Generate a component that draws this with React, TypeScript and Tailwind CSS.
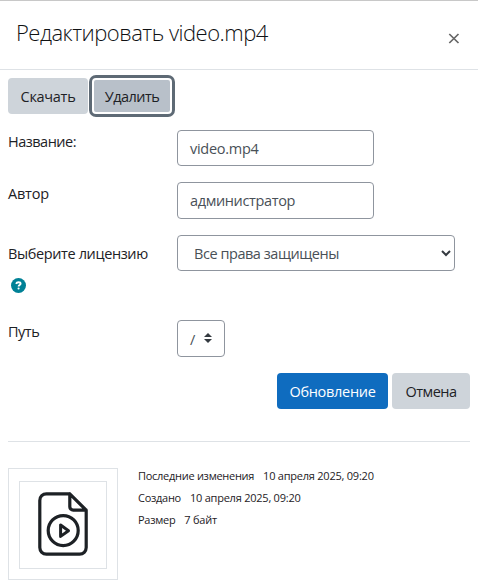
import React from 'react';

function Row({ label, labelClass, className, children }: { label: string; labelClass: string; className: string; children: React.ReactNode }) {
  return (
    <div className={`flex items-start ${className}`}>
      <div className="w-[169px] shrink-0">
        <span className={`block whitespace-nowrap leading-6 ${labelClass}`}>{label}</span>
      </div>
      {children}
    </div>
  );
}

function Info({ label, value }: { label: string; value: string }) {
  return (
    <div className="flex h-[22px] items-center gap-[9px] whitespace-nowrap text-[11px]">
      <span className="tracking-[-0.28px]">{label}</span>
      <span className="tracking-[-0.23px]">{value}</span>
    </div>
  );
}

function HelpIcon() {
  return (
    <svg className="ml-[3px] mt-[12px] block" width="15" height="15" viewBox="0 0 15 15">
      <circle cx="7.5" cy="7.5" r="7.5" fill="#008196" />
      <path d="M5.1 5.9C5.5 4.8 6.3 4.3 7.5 4.3c1.3 0 2.1.6 2.1 1.5 0 1.2-2 1.3-2 2.7" fill="none" stroke="#fff" strokeWidth="1.9" />
      <rect x="6.5" y="9.4" width="2.1" height="2.1" rx="1" fill="#fff" />
    </svg>
  );
}

function VideoFileIcon() {
  return (
    <svg className="mb-px" width="50" height="64" viewBox="0 0 50 64" fill="none" stroke="#1d2125" strokeWidth="3.2" strokeLinejoin="round" strokeLinecap="round">
      <path d="M31.8 1.8H8.4a6.6 6.6 0 0 0-6.6 6.6v47.2a6.6 6.6 0 0 0 6.6 6.6h33.2a6.6 6.6 0 0 0 6.6-6.6V18.2L31.8 1.8v13a3.4 3.4 0 0 0 3.4 3.4h13" />
      <circle cx="25.2" cy="38.6" r="15" />
      <path d="M22.6 33v11.4l7.9-5.7z" strokeWidth="3" />
    </svg>
  );
}

export default function App() {
  return (
    <div className="h-[588px] w-[478px] overflow-hidden border-t border-[#c8c8c8] bg-white font-['Open_Sans','Noto_Sans',sans-serif] text-[14.5px] text-[#1d2125]">
      <header className="flex h-[69px] items-start justify-between border-b border-[#dee2e6] pl-4 pr-[18px]">
        <h1 className="mt-[13px] whitespace-nowrap text-[22px] font-light leading-9 tracking-[-0.5px] text-[#101214]">Редактировать video.mp4</h1>
        <svg className="mt-[32px] block" width="12" height="11" viewBox="0 0 12 11" stroke="#666" strokeWidth="1.7">
          <path d="M1.3 1l9.2 9M10.5 1l-9.2 9" />
        </svg>
      </header>
      <main className="px-2 pt-2">
        <div className="flex h-9">
          <button className="w-20 rounded-[4px] bg-[#ced4da] pt-0.5 tracking-[-0.3px]">Скачать</button>
          <button className="ml-1 w-[80px] rounded-[4px] border-2 border-white bg-[#b8c0c9] pt-0.5 tracking-[-0.55px] outline-3 outline-[#5e6a75]">Удалить</button>
        </div>
        <Row label="Название:" labelClass="tracking-[-0.5px]" className="mt-4">
          <div className="flex h-9 w-[197px] items-center rounded-[4px] border border-[#8f959e] px-3 pt-0.5 tracking-[-0.28px] text-[#495057]">video.mp4</div>
        </Row>
        <Row label="Автор" labelClass="tracking-[-0.2px]" className="mt-4">
          <div className="flex h-[37px] w-[197px] items-center rounded-[4px] border border-[#8f959e] px-3 pt-px tracking-[-0.36px] text-[#495057]">администратор</div>
        </Row>
        <div className="mt-4 flex h-[69px] items-start">
          <div className="w-[169px] shrink-0 pt-[7px]">
            <span className="block whitespace-nowrap leading-6 tracking-[-0.38px]">Выберите лицензию</span>
            <HelpIcon />
          </div>
          <div className="flex h-9 w-[278px] items-center justify-between rounded-[4px] border border-[#8f959e] pl-4 pr-[3px] text-[#495057]">
            <span className="whitespace-nowrap pt-0.5 tracking-[-0.45px]">Все права защищены</span>
            <svg width="10" height="7" viewBox="0 0 10 7" fill="none" stroke="#343a40" strokeWidth="2"><path d="M1 1l4 4 4-4" /></svg>
          </div>
        </div>
        <Row label="Путь" labelClass="tracking-[-0.5px]" className="mt-4">
          <div className="flex h-[37px] w-12 items-center rounded-[4px] border border-[#8f959e] pl-3 text-[#495057]">
            <span className="pt-0.5">/</span>
            <svg className="-mt-0.5 ml-[9px]" width="8" height="10" viewBox="0 0 8 10" fill="#343a40"><path d="M4 0l4 4H0zM0 6h8l-4 4z" /></svg>
          </div>
        </Row>
        <div className="mt-4 flex h-9 justify-end gap-1">
          <button className="w-[111px] rounded-[4px] bg-[#0f6cbf] pt-0.5 tracking-[-0.3px] text-white">Обновление</button>
          <button className="w-[78px] rounded-[4px] bg-[#ced4da] pt-0.5 tracking-[-0.5px]">Отмена</button>
        </div>
        <hr className="mt-8 border-[#dee2e6]" />
        <div className="mt-[26px] flex items-start">
          <div className="flex h-[112px] w-[110px] items-center justify-center border border-[#dee2e6] pt-px">
            <div className="flex h-[88px] w-[88px] items-center justify-center border border-[#dee2e6]">
              <VideoFileIcon />
            </div>
          </div>
          <div className="ml-5 -mt-[3px]">
            <Info label="Последние изменения" value="10 апреля 2025, 09:20" />
            <Info label="Создано" value="10 апреля 2025, 09:20" />
            <Info label="Размер" value="7 байт" />
          </div>
        </div>
      </main>
    </div>
  );
}
